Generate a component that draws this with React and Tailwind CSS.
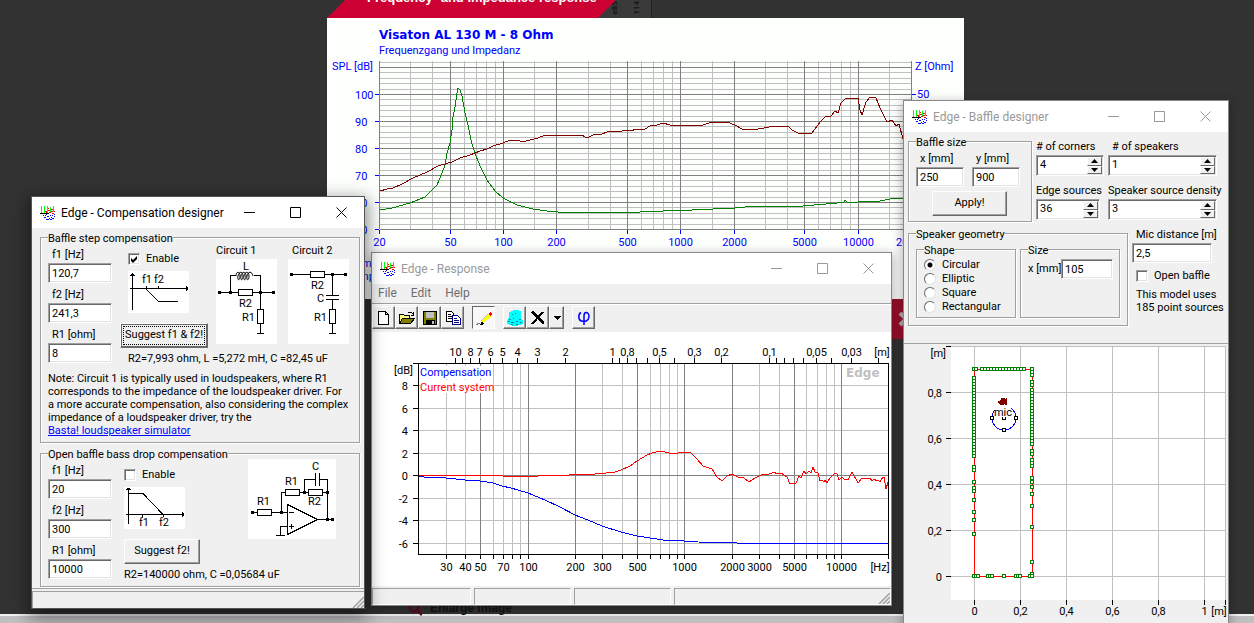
import { useId, useState } from "react";
import { clsx } from "clsx";

const SUNKEN =
  "border border-t-[#a0a0a0] border-l-[#a0a0a0] border-r-white border-b-white bg-white shadow-[inset_1px_1px_0_#696969,inset_-1px_-1px_0_#e3e3e3]";
const RAISED =
  "border border-t-white border-l-white border-r-[#696969] border-b-[#696969] bg-[#f0f0f0] shadow-[inset_-1px_-1px_0_#a0a0a0]";

const SPL_CURVE =
  "380,191 387,189 393,188 402,184 413,178 427,172 438,166 448,163 452,162 460,158 470,155 480,151 487,149 493,146 503,143 510,140 518,140 522,142 538,138 545,135 572,135 575,136 582,135 585,137 589,137 593,135 602,134 607,132 622,131 627,130 630,131 637,129 645,129 650,126 657,125 663,123 670,125 700,126 712,122 727,122 735,125 742,129 758,129 775,126 789,127 792,130 798,133 812,133 815,129 820,122 826,116 831,116 835,111 838,113 841,103 846,98 858,98 860,110 862,115 866,102 870,97 876,98 880,108 887,122 892,120 896,126 899,124 903,139 908,132";
const IMPEDANCE_CURVE =
  "380,210 392,208 410,203 425,197 437,185 439,180 442,173 445,165 447,153 450,143 452,130 453,117 455,107 457,93 458,88 460,90 462,96 465,113 468,125 470,135 472,144 476,156 481,168 487,180 495,191 503,198 517,205 533,209 547,211 558,212 640,212 663,211 692,210 735,208 755,206 767,207 787,206 803,206 837,203 844,202 845,200 847,202 858,202 880,201 890,199 910,198";
const SYSTEM_CURVE =
  "419,475 502,475 503,476 538,476 539,475 569,475 570,474 595,474 597,473 606,473 615,472 621,470 630,466 637,461 647,455 652,453 660,451 674,454 682,452 690,452 697,459 703,466 712,469 717,477 722,481 727,476 732,474 738,477 744,478 749,482 755,478 763,474 767,475 774,472 777,474 781,473 787,477 790,484 796,483 799,476 801,478 804,471 806,474 809,471 811,473 813,467 815,472 818,473 820,481 822,480 824,482 825,480 827,483 830,478 835,473 837,474 839,480 842,477 844,479 848,480 852,472 858,483 862,478 870,478 872,481 874,479 877,481 878,480 880,482 883,477 884,477 886,489 888,482";
const COMPENSATION_CURVE =
  "419,476 424,477 446,478 465,480 480,481 493,483 502,486 511,488 528,493 545,500 560,507 575,515 588,520 602,526 621,532 637,536 650,538 663,540 684,541 698,542 737,543 888,543";

function range(from, to, step) {
  const values = [];
  for (let v = from; v <= to; v += step) values.push(v);
  return values;
}

function logScale(start, decade) {
  return (hz) => Math.round(start + decade * Math.log10(hz / 20)) + 0.5;
}

function AppIcon() {
  return (
    <svg
      width="16"
      height="14"
      viewBox="0 0 16 14"
      shapeRendering="crispEdges"
      fill="none"
      className="shrink-0"
    >
      <path d="M1.5 0v7M4.5 0v7M7.5 0v7M10.5 1v6M13.5 0v6" stroke="#00ff00" />
      <path
        d="M5 5.5h2M8 4.5h2M11 5.5h2M6 6.5h1M9 6.5h2M12 7.5h2M8 2.5h1M11 3.5h2M14 5.5h1"
        stroke="#ff0000"
      />
      <path d="M0 7.5h9" stroke="#000" />
      <path
        d="M3 9.5h1M4 11.5h2M6 13.5h3M10 13.5h2M12 12.5h2M14 10.5h1M14 8.5h1M6 8.5h1M7 10.5h2M10 9.5h1M11 11.5h1M12 9.5h1M5 9.5h1M9 12.5h1"
        stroke="#0000ff"
      />
    </svg>
  );
}

function AppWindow({ title, active, className, children }) {
  return (
    <section
      aria-label={title}
      className={clsx(
        "absolute flex flex-col bg-[#f0f0f0]",
        active
          ? "shadow-[0_0_0_1px_#555,0_6px_16px_4px_rgba(0,0,0,0.45)]"
          : "shadow-[0_0_0_1px_#888,0_3px_10px_2px_rgba(0,0,0,0.3)]",
        className,
      )}
    >
      <header className="flex h-[31px] shrink-0 items-center bg-white pl-2">
        <AppIcon />
        <h2
          className={clsx(
            "ml-[5px] w-0 flex-1 font-[Roboto,sans-serif] text-[12px] leading-4 whitespace-nowrap",
            active ? "text-black" : "text-[#999]",
          )}
        >
          {title}
        </h2>
        <div className={clsx("flex h-full", active ? "text-black" : "text-[#999]")}>
          {[
            ["Minimize", "M0 5.5h11"],
            ["Maximize", "M0.5 0.5h10v10h-10z"],
            ["Close", "M0.5 0.5l10 10M10.5 0.5l-10 10"],
          ].map(([name, d]) => (
            <button key={name} type="button" aria-label={name} className="flex w-[46px] items-center justify-center">
              <svg width="11" height="11" viewBox="0 0 11 11" fill="none" stroke="currentColor">
                <path d={d} />
              </svg>
            </button>
          ))}
        </div>
      </header>
      {children}
    </section>
  );
}

function GroupBox({ title, className, children }) {
  return (
    <fieldset
      className={clsx(
        "min-w-0 border border-[#a0a0a0] pl-[7px] shadow-[1px_1px_0_#fff,inset_1px_1px_0_#fff]",
        className,
      )}
    >
      <legend className="h-3 bg-[#f0f0f0] leading-[15px] whitespace-nowrap">{title}</legend>
      {children}
    </fieldset>
  );
}

function Field({ label, value, className }) {
  const id = useId();
  return (
    <div className={clsx("flex flex-col", className)}>
      <label htmlFor={id} className="h-5 pl-1 leading-[23px] whitespace-nowrap">
        {label}
      </label>
      <input id={id} defaultValue={value} className={clsx("h-5 w-full px-[3px] outline-none", SUNKEN)} />
    </div>
  );
}

function SpinField({ label, value, labelClass, className }) {
  const id = useId();
  const [current, setCurrent] = useState(value);
  return (
    <div>
      <label htmlFor={id} className={clsx("block h-4 leading-4 whitespace-nowrap", labelClass)}>
        {label}
      </label>
      <div className={clsx("flex h-[21px] p-px", SUNKEN, className)}>
        <input
          id={id}
          value={current}
          onChange={(event) => setCurrent(event.target.value)}
          className="w-0 flex-1 bg-transparent pl-0.5 outline-none"
        />
        <div className="flex w-[15px] flex-col">
          {[
            ["Increase", 1, "M3.5 0L7 4H0z"],
            ["Decrease", -1, "M0 0h7L3.5 4z"],
          ].map(([name, delta, d]) => (
            <button
              key={name}
              type="button"
              aria-label={`${name} ${label}`}
              onClick={() => setCurrent(Number(current) + delta)}
              className="flex flex-1 items-center justify-center border border-t-white border-l-white border-r-[#696969] border-b-[#696969] bg-[#f0f0f0]"
            >
              <svg width="7" height="4" viewBox="0 0 7 4">
                <path d={d} />
              </svg>
            </button>
          ))}
        </div>
      </div>
    </div>
  );
}

function CheckBox({ label, checked, className }) {
  return (
    <label className={clsx("flex h-4 items-center gap-1.5", className)}>
      <span className="relative flex">
        <input type="checkbox" defaultChecked={checked} className={clsx("peer size-3 appearance-none", SUNKEN)} />
        <svg
          width="12"
          height="12"
          viewBox="0 0 12 12"
          className="pointer-events-none absolute inset-0 hidden peer-checked:block"
        >
          <path d="M3 5l2 2 4-4v3L5 10 3 8z" />
        </svg>
      </span>
      {label}
    </label>
  );
}

function PushButton({ children, isDefault, className }) {
  return (
    <button
      type="button"
      className={clsx(
        "h-[25px] whitespace-nowrap",
        RAISED,
        isDefault && "p-0.5 ring-1 ring-[#696969] ring-inset",
        className,
      )}
    >
      {isDefault ? (
        <span className="flex h-full items-center justify-center border border-dotted border-black">{children}</span>
      ) : (
        children
      )}
    </button>
  );
}

function ResizeGrip() {
  return (
    <svg width="12" height="12" viewBox="0 0 12 12" className="self-end" fill="none">
      <path d="M12 1L1 12M12 5L5 12M12 9L9 12" stroke="#a0a0a0" strokeWidth="1.5" />
    </svg>
  );
}

function StepSketch() {
  return (
    <svg
      width="61"
      height="42"
      viewBox="0 0 61 42"
      className="ml-2 self-start bg-white"
      fill="none"
      stroke="#000"
      shapeRendering="crispEdges"
    >
      <path d="M4.5 39V2M2 4.5h5M3 3.5h3M2 17.5h57M58.5 15v5M59.5 16v3M18.5 15v3M30.5 15v3M18 18l12 12h20" />
      <g fill="#000" stroke="none">
        <text x="14" y="12">f1</text>
        <text x="26" y="12">f2</text>
      </g>
    </svg>
  );
}

function DropSketch() {
  return (
    <svg width="61" height="42" viewBox="0 0 61 42" className="bg-white" fill="none" stroke="#000" shapeRendering="crispEdges">
      <path d="M4.5 37V1M2 2.5h5M3 1.5h3M4 6.5h15l20 21M2 27.5h57M58.5 25v5M59.5 26v3M18.5 28v2M39.5 28v2" />
      <g fill="#000" stroke="none">
        <text x="15" y="39">f1</text>
        <text x="35" y="39">f2</text>
      </g>
    </svg>
  );
}

function CircuitOne() {
  return (
    <svg width="61" height="85" viewBox="0 0 61 85" className="bg-white" fill="none" stroke="#000" shapeRendering="crispEdges">
      <path d="M3 33.5h19M37 33.5h22M14.5 33V16.5H20M38 16.5h6.5V50M22.5 30.5h14v6h-14zM41.5 50.5h6v14h-6zM44.5 65v9M41 74.5h7" />
      <path
        d="M20 17c0-5 4-5 4 0s-3 5-2 0 5-5 5 0-3 5-2 0 5-5 5 0-3 5-2 0 5-5 5 0-3 5-2 0 5-5 6 0"
        shapeRendering="auto"
      />
      <g fill="#000" stroke="none">
        <path d="M2 32h3v3H2zM13 32h3v3h-3zM43 32h3v3h-3zM56 32h3v3h-3z" />
        <text x="27" y="11">L</text>
        <text x="23" y="48">R2</text>
        <text x="26" y="62">R1</text>
      </g>
    </svg>
  );
}

function CircuitTwo() {
  return (
    <svg width="61" height="85" viewBox="0 0 61 85" className="bg-white" fill="none" stroke="#000" shapeRendering="crispEdges">
      <path d="M3 15.5h19M37 15.5h21M22.5 12.5h14v6h-14zM44.5 15v21M38 36.5h13M38 40.5h13M44.5 41v9M41.5 50.5h6v14h-6zM44.5 65v9M41 74.5h7" />
      <g fill="#000" stroke="none">
        <path d="M2 14h3v3H2zM43 14h3v3h-3zM56 14h3v3h-3z" />
        <text x="23" y="30">R2</text>
        <text x="29" y="43">C</text>
        <text x="26" y="62">R1</text>
      </g>
    </svg>
  );
}

function OpAmpCircuit() {
  return (
    <svg width="88" height="80" viewBox="0 0 88 80" className="bg-white" fill="none" stroke="#000" shapeRendering="crispEdges">
      <path d="M4 53.5h5M24 53.5h15M9.5 50.5h14v6h-14zM33.5 53V33.5H37M37.5 30.5h14v6h-14zM52 33.5h8M60.5 30.5h14v6h-14zM75 33.5h4.5V60M56.5 33V20.5h11M72 20.5h7.5V34M67.5 14v13M71.5 14v13M69 60.5h16" />
      <path d="M39.5 45.5v30l30-15zM39 67.5h-6.5V76M28 76.5h9M41 53.5h5M41 67.5h5M43.5 65v5" />
      <g fill="#000" stroke="none">
        <path d="M3 52h3v3H3zM32 52h3v3h-3zM55 32h3v3h-3zM78 32h3v3h-3zM78 59h3v3h-3zM83 59h3v3h-3z" />
        <text x="9" y="46">R1</text>
        <text x="37" y="26">R1</text>
        <text x="60" y="46">R2</text>
        <text x="64" y="11">C</text>
      </g>
    </svg>
  );
}

function CompensationWindow() {
  return (
    <AppWindow title="Edge - Compensation designer" active className="top-[197px] left-8 w-[332px]">
      <div className="flex flex-col gap-1 pt-[3px] pr-1 pl-2">
        <GroupBox title="Baffle step compensation" className="pb-[5px]">
          <div className="flex gap-2">
            <div className="w-16 shrink-0">
              <Field label="f1 [Hz]" value="120,7" />
              <Field label="f2 [Hz]" value="241,3" />
              <Field label="R1 [ohm]" value="8" />
            </div>
            <div className="flex flex-col">
              <div className="flex gap-2">
                <div className="flex w-[88px] flex-col pt-2">
                  <CheckBox label="Enable" checked className="mb-1 self-start pl-2" />
                  <StepSketch />
                  <PushButton isDefault className="mt-2.5 w-full">
                    Suggest f1 &amp; f2!
                  </PushButton>
                </div>
                <div className="w-16">
                  <p className="h-4 leading-4">Circuit 1</p>
                  <CircuitOne />
                </div>
                <div className="w-16">
                  <p className="h-4 pl-1 leading-4">Circuit 2</p>
                  <CircuitTwo />
                </div>
              </div>
              <p className="mt-1 pl-2 leading-[13px] whitespace-nowrap">R2=7,993 ohm, L =5,272 mH, C =82,45 uF</p>
            </div>
          </div>
          <p className="mt-[7px] leading-[13px] whitespace-nowrap">
            Note: Circuit 1 is typically used in loudspeakers, where R1
            <br />
            corresponds to the impedance of the loudspeaker driver. For
            <br />
            a more accurate compensation, also considering the complex
            <br />
            impedance of a loudspeaker driver, try the
            <br />
            <a href="#basta" className="text-[#0000ff] underline">
              Basta! loudspeaker simulator
            </a>
          </p>
        </GroupBox>
        <GroupBox title="Open baffle bass drop compensation" className="pb-[5px]">
          <div className="flex gap-3">
            <div className="w-16 shrink-0">
              <Field label="f1 [Hz]" value="20" />
              <Field label="f2 [Hz]" value="300" />
              <Field label="R1 [ohm]" value="10000" />
            </div>
            <div className="flex flex-col">
              <div className="flex gap-12">
                <div className="flex w-[76px] flex-col items-start pt-2">
                  <CheckBox label="Enable" className="mb-1" />
                  <DropSketch />
                  <PushButton className="mt-2.5 w-full">Suggest f2!</PushButton>
                </div>
                <OpAmpCircuit />
              </div>
              <p className="mt-1 leading-[13px] whitespace-nowrap">R2=140000 ohm, C =0,05684 uF</p>
            </div>
          </div>
        </GroupBox>
      </div>
      <footer className="mt-px flex h-5 justify-end border-t border-[#a0a0a0] pt-0.5">
        <div className="flex flex-1 justify-end border-t border-l border-[#a0a0a0]">
          <ResizeGrip />
        </div>
      </footer>
    </AppWindow>
  );
}

const TOOL_GROUPS = [
  [
    [
      "New",
      <path key="n" d="M2.5 1.5h7l3 3v10h-10zM9.5 1.5v3h3" fill="#fff" stroke="#000" />,
    ],
    [
      "Open",
      <g key="o">
        <path d="M0.5 13.5v-9h4l1 1h5v3" fill="#ffff80" stroke="#000" />
        <path d="M0.5 13.5l3-5h12l-4 5z" fill="#808000" stroke="#000" />
        <path d="M8.5 2.5h4l2 2M14.5 2v3H12" fill="none" stroke="#000" />
      </g>,
    ],
    [
      "Save",
      <g key="s">
        <path d="M1.5 1.5h13v13h-13z" fill="#808000" stroke="#000" />
        <path d="M4 2h8v6H4z" fill="#c0c0c0" />
        <path d="M4 10h9v4H4z" fill="#000" />
        <path d="M10 11h2v3h-2z" fill="#c0c0c0" />
      </g>,
    ],
    [
      "Copy",
      <g key="c" fill="#fff">
        <path d="M1.5 1.5h5l2 2v8h-7z" stroke="#000" />
        <path d="M3 4.5h3M3 6.5h4M3 8.5h4" stroke="#000" />
        <path d="M7.5 5.5h5l3 3v6h-8z" stroke="#000080" />
        <path d="M9 8.5h3M9 10.5h5M9 12.5h5" stroke="#000080" />
      </g>,
    ],
  ],
  [
    [
      "Draw",
      <g key="d">
        <path d="M5 11l7-7 3 3-7 5H5z" fill="#ffff00" />
        <path d="M5 11l7-7" stroke="#c0c0c0" />
        <path d="M13 3h3v2h-3zM14 2h1v4h-1z" fill="#ff0000" />
        <path d="M0 14.5h2M1 13.5h3" stroke="#808080" />
        <path d="M4 14.5h3M5 13.5h3M5 12.5h2" stroke="#000" />
      </g>,
      "pressed",
    ],
  ],
  [
    [
      "Calculate",
      <g key="k">
        <path d="M2 2h2V1h2V0h6v1h2v8h1v1h1v4h-2v1h-3v1H5v-1H2v-1H0v-4h1V8h1z" fill="#00ffff" />
        <path
          d="M1 11.5h2M4 12.5h3M9 11.5h2M13 12.5h2M5 4.5h1M8 3.5h1M6 8.5h1M4 14.5h2M9 14.5h2M2 9.5h2M12 9.5h2"
          stroke="#009090"
        />
      </g>,
    ],
    [
      "Delete",
      <path
        key="x"
        d="M2 2l12 12M3 2l11 11M13 2L2 14"
        fill="none"
        stroke="#000"
        strokeWidth="2"
      />,
    ],
    ["Delete options", <path key="v" d="M5 6h7L8.5 10z" />, "narrow"],
  ],
];

function Toolbar() {
  return (
    <div className="flex h-[29px] items-start gap-2 border-t border-[#a0a0a0] pt-0.5 shadow-[inset_0_1px_0_#fff]">
      {TOOL_GROUPS.map((group) => (
        <div key={group[0][0]} className="flex">
          {group.map(([name, icon, kind]) => (
            <button
              key={name}
              type="button"
              aria-label={name}
              className={clsx(
                "flex h-[23px] items-center justify-center overflow-hidden",
                kind === "narrow" ? "w-[15px]" : "w-[23px]",
                kind === "pressed"
                  ? "border border-t-[#696969] border-l-[#696969] border-r-white border-b-white bg-[#f8f8f8]"
                  : RAISED,
              )}
            >
              <svg width="16" height="16" viewBox="0 0 16 16" shapeRendering="crispEdges" className="shrink-0">
                {icon}
              </svg>
            </button>
          ))}
        </div>
      ))}
      <button type="button" aria-label="Phase" className={clsx("flex h-[23px] w-[23px] items-center justify-center", RAISED)}>
        <svg width="14" height="16" viewBox="0 0 14 16" fill="none" stroke="#0000ff" strokeWidth="1.5">
          <path d="M4 2.5C1 4 1 10 4.5 11c3 .8 7 .5 7.5-4 .3-3-1.5-4.5-3-4.500S7 4 7 6v9" />
        </svg>
      </button>
    </div>
  );
}

function ResponseChart() {
  const x = logScale(418, 156.8);
  const y = (db) => Math.round(475 - db * 11.25) + 0.5;
  const minor = [30, 40, 60, 70, 80, 90, 300, 400, 600, 700, 800, 900, 3000, 4000, 6000, 7000, 8000, 9000];
  const major = [50, 100, 200, 500, 1000, 2000, 5000, 10000];
  const metres = [
    ...range(2, 10, 1),
    ...range(1, 10, 1).map((n) => n / 10),
    ...range(2, 9, 1).map((n) => n / 100),
  ];
  const metreLabels = ["10", "8", "7", "6", "5", "4", "3", "2", "1", "0,8", "0,5", "0,3", "0,2", "0,1", "0,05", "0,03"];
  const hzLabels = [30, 40, 50, 70, 100, 200, 300, 500, 1000, 2000, 3000, 5000, 10000];

  return (
    <svg viewBox="372 332 519 254" className="block w-full bg-white" shapeRendering="crispEdges" fill="none">
      <g stroke="#c0c0c0">
        {minor.map((hz) => (
          <path key={hz} d={`M${x(hz)} 364V554`} />
        ))}
        {[8, 6, 4, 2, -2, -4, -6].map((db) => (
          <path key={db} d={`M419 ${y(db)}H888`} />
        ))}
      </g>
      <g stroke="#808080">
        {major.map((hz) => (
          <path key={hz} d={`M${x(hz)} 364V554`} />
        ))}
        <path d="M419 475.5H888" />
      </g>
      <g stroke="#000">
        <path d="M413 363.5H888.5V559M418.5 363V554.5H888" />
        {[8, 6, 4, 2, 0, -2, -4, -6].map((db) => (
          <path key={db} d={`M413 ${y(db)}h5`} />
        ))}
        {[...minor, ...major].map((hz) => (
          <path key={hz} d={`M${x(hz)} 555v4`} />
        ))}
        {metres.map((m) => (
          <path key={m} d={`M${x(344 / m)} 358v5`} />
        ))}
      </g>
      <polyline points={COMPENSATION_CURVE} stroke="#0000ff" />
      <polyline points={SYSTEM_CURVE} stroke="#ff0000" />
      <path d="M420 366h68v13h-68zM420 380h70v13h-70zM845 365h38v17h-38z" fill="#fff" />
      <g fill="#000" textAnchor="middle">
        {metreLabels.map((label) => (
          <text key={label} x={x(344 / Number(label.replace(",", ".")))} y="356">
            {label}
          </text>
        ))}
        <text x="882" y="356">[m]</text>
        {hzLabels.map((hz) => (
          <text key={hz} x={x(hz)} y="571">
            {hz}
          </text>
        ))}
        <text x="880" y="571">[Hz]</text>
      </g>
      <g fill="#000" textAnchor="end">
        <text x="413" y="374">[dB]</text>
        {[8, 6, 4, 2, 0, -2, -4, -6].map((db) => (
          <text key={db} x="408" y={y(db) + 4}>
            {db}
          </text>
        ))}
      </g>
      <text x="420" y="376" fill="#0000ff">Compensation</text>
      <text x="420" y="391" fill="#ff0000">Current system</text>
      <text x="846" y="377" fill="#c0c0c0" className="font-['DejaVu_Sans',sans-serif] text-[12px] font-bold">
        Edge
      </text>
    </svg>
  );
}

function ResponseWindow() {
  return (
    <AppWindow title="Edge - Response" className="top-[253px] left-[372px] w-[519px]">
      <nav className="flex h-[19px] items-center gap-3.5 pb-0.5 pl-1.5 font-[Roboto,sans-serif] text-[12px] text-[#6d6d6d]">
        {["File", "Edit", "Help"].map((item) => (
          <button key={item} type="button">
            {item}
          </button>
        ))}
      </nav>
      <Toolbar />
      <ResponseChart />
      <footer className="flex h-[19px] gap-[3px] pt-0.5">
        {["w-[99px]", "w-[97px]", "w-[97px]"].map((width, index) => (
          <div
            key={index}
            className={clsx("border border-t-[#a0a0a0] border-l-[#a0a0a0] border-r-white border-b-white", width)}
          />
        ))}
        <div className="flex flex-1 justify-end border border-t-[#a0a0a0] border-l-[#a0a0a0] border-r-white border-b-white">
          <ResizeGrip />
        </div>
      </footer>
    </AppWindow>
  );
}

const EDGE_SOURCES = [
  ...[369, ...range(378, 457, 3), 467, 470, 482, 488, 491, 500, 512, 520, 534, 576].map((y) => [974, y]),
  ...[369, 372, 375, 382, 385, ...range(390, 446, 3), 451, 454, 460, 463, 466, 478, 482, 487, 494, 506, 527, 562, 574].map(
    (y) => [1032, y],
  ),
  ...[976, ...range(982, 1026, 3)].map((x) => [x, 369]),
  ...[976, 978, 988, 990, 992, 1004, 1016, 1018, 1020, 1030, 1032].map((x) => [x, 576]),
];

function BafflePlot() {
  const ticks = [0, 0.2, 0.4, 0.6, 0.8, 1];
  const x = (m) => Math.round(974 + m * 230) + 0.5;
  const y = (m) => Math.round(576 - m * 230) + 0.5;
  const format = (m) => String(m).replace(".", ",");

  return (
    <svg viewBox="904 345 324 285" className="block w-full" shapeRendering="crispEdges" fill="none">
      <path d="M951 346h275v254H951z" fill="#fff" />
      <g stroke="#c0c0c0">
        {ticks.map((m) => (
          <path key={m} d={`M${x(m)} 346V600M951 ${y(m)}H1225`} />
        ))}
        <path d="M1225.5 346V600" />
      </g>
      <g stroke="#000">
        {ticks.map((m) => (
          <path key={m} d={`M${x(m)} 600v5M946 ${y(m)}h5`} />
        ))}
        <path d="M1225.5 600v5" />
      </g>
      <path d="M974.5 369.5h58v207h-58z" stroke="#ff0000" />
      <g fill="#fff" stroke="#008000">
        {EDGE_SOURCES.map(([cx, cy]) => (
          <rect key={`${cx}-${cy}`} x={cx - 1.5} y={cy - 1.5} width="3" height="3" />
        ))}
      </g>
      <circle cx="1004" cy="418" r="12" stroke="#0000ff" />
      <path d="M995 406h16v11h-16z" fill="#fff" />
      <g fill="#fff" stroke="#000">
        <path d="M990.5 416.5h3v3h-3zM1014.5 416.5h3v3h-3zM1002.5 428.5h3v3h-3z" />
        <path d="M1002.5 417v2.5h3V417" />
      </g>
      <path d="M998 401h2v-1h1v-2h4v1h1v-1h1v7h-2v-1h-1v1h-4v-1h-1v-1h-1z" fill="#800000" />
      <g fill="#000" textAnchor="end">
        <text x="946" y="357">[m]</text>
        {ticks.slice(0, 5).map((m) => (
          <text key={m} x="942" y={y(m) + 4}>
            {format(m)}
          </text>
        ))}
      </g>
      <g fill="#000" textAnchor="middle">
        <text x="1003" y="416">mic</text>
        {ticks.map((m) => (
          <text key={m} x={x(m)} y="615">
            {format(m)}
          </text>
        ))}
        <text x="1219" y="615">[m]</text>
      </g>
    </svg>
  );
}

function BaffleWindow() {
  return (
    <AppWindow title="Edge - Baffle designer" className="top-[101px] left-[904px] w-[324px]">
      <div className="flex flex-col gap-[5px] px-1 pt-[3px] pb-[17px]">
        <div className="flex gap-1">
          <GroupBox title="Baffle size" className="w-[124px] pb-[5px]">
            <div className="flex gap-2">
              <Field label="x [mm]" value="250" className="w-12" />
              <Field label="y [mm]" value="900" className="w-12" />
            </div>
            <PushButton className="mt-1 ml-4 w-[75px]">Apply!</PushButton>
          </GroupBox>
          <div className="grid grid-cols-[68px_109px] content-start gap-x-1 gap-y-[7px] pt-1">
            <SpinField label="# of corners" value="4" />
            <SpinField label="# of speakers" value="1" labelClass="pl-1" />
            <SpinField label="Edge sources" value="36" className="w-16" />
            <SpinField label="Speaker source density" value="3" />
          </div>
        </div>
        <div className="flex gap-1">
          <GroupBox title="Speaker geometry" className="w-[220px] pt-1 pr-[7px] pb-[7px]">
            <div className="grid grid-cols-2 gap-1">
              <GroupBox title="Shape" className="pt-[3px] pb-[3px]">
                {["Circular", "Elliptic", "Square", "Rectangular"].map((shape) => (
                  <label key={shape} className="flex h-3.5 items-center gap-1.5">
                    <input
                      type="radio"
                      name="shape"
                      defaultChecked={shape === "Circular"}
                      className="size-3 appearance-none rounded-full border border-t-[#696969] border-l-[#696969] border-r-[#e3e3e3] border-b-[#e3e3e3] bg-white checked:bg-[radial-gradient(circle,#000_2px,#fff_3px)]"
                    />
                    {shape}
                  </label>
                ))}
              </GroupBox>
              <GroupBox title="Size">
                <label className="mt-1 flex items-center gap-px whitespace-nowrap">
                  <span className="w-8">x [mm]</span>
                  <input defaultValue="105" className={clsx("h-5 w-[52px] px-[3px] outline-none", SUNKEN)} />
                </label>
              </GroupBox>
            </div>
          </GroupBox>
          <div className="flex-1">
            <Field label="Mic distance [m]" value="2,5" className="-mt-1 w-20" />
            <CheckBox label="Open baffle" className="mt-[5px] pl-1" />
            <p className="mt-1 pl-1 leading-[13px] whitespace-nowrap">
              This model uses
              <br />
              185 point sources
            </p>
          </div>
        </div>
      </div>
      <div className="border-t border-[#a0a0a0] pt-px">
        <BafflePlot />
      </div>
    </AppWindow>
  );
}

function FrequencyPanel() {
  const x = logScale(379, 177.4);
  const y = (db) => Math.round(94 - (db - 100) * 2.7) + 0.5;
  const minor = [
    30, 40, 60, 70, 80, 90, 150, 300, 400, 600, 700, 800, 900, 1500, 3000, 4000, 6000, 7000, 8000, 9000, 15000,
  ];
  const major = [20, 50, 100, 200, 500, 1000, 2000, 5000, 10000, 20000];

  return (
    <svg
      viewBox="327 18 637 281"
      className="absolute top-[18px] left-[327px] w-[637px] bg-[#fdfffd]"
      shapeRendering="crispEdges"
      fill="none"
    >
      <g stroke="#c0c0c0">
        {minor.map((hz) => (
          <path key={hz} d={`M${x(hz)} 61V229`} />
        ))}
        {range(52, 112, 2).map((db) => (
          <path key={db} d={`M380 ${y(db)}H911`} />
        ))}
      </g>
      <g stroke="#808080">
        {major.map((hz) => (
          <path key={hz} d={`M${x(hz)} 61V229`} />
        ))}
        {range(50, 110, 10).map((db) => (
          <path key={db} d={`M380 ${y(db)}H911`} />
        ))}
      </g>
      <g stroke="#0000ff">
        {major.map((hz) => (
          <path key={hz} d={`M${x(hz)} 230v4`} />
        ))}
        {range(50, 100, 10).map((db) => (
          <path key={db} d={`M375 ${y(db)}h4`} />
        ))}
        <path d="M912 94.5h4" />
      </g>
      <polyline points={IMPEDANCE_CURVE} stroke="#008000" />
      <polyline points={SPL_CURVE} stroke="#800000" />
      <g fill="#0000ff">
        <text x="379" y="39" className="font-['DejaVu_Sans',sans-serif] text-[12px] font-bold">
          Visaton AL 130 M - 8 Ohm
        </text>
        <text x="379" y="54">Frequenzgang und Impedanz</text>
        <text x="332" y="70">SPL [dB]</text>
        <text x="915" y="70">Z [Ohm]</text>
        <text x="917" y="98">50</text>
        {range(50, 100, 10).map((db) => (
          <text key={db} x="355" y={y(db) + 4}>
            {db}
          </text>
        ))}
        <g textAnchor="middle">
          {major.map((hz) => (
            <text key={hz} x={x(hz)} y="246">
              {hz}
            </text>
          ))}
        </g>
        <text x="362" y="267">m</text>
        <text x="359" y="280">mp</text>
      </g>
    </svg>
  );
}

export default function App() {
  return (
    <div className="relative flex h-screen w-full flex-col justify-end overflow-hidden bg-[#323232] font-[Roboto,'Liberation_Sans',sans-serif] text-[11px] text-black">
      <div className="absolute top-0 left-[598px] flex h-[18px] w-[54px] items-start justify-end gap-2.5 border-r border-[#222] bg-[#3a3a3a] pt-px pr-2 text-[8px] leading-3 font-bold text-[#161616]">
        <span className="rotate-180 [writing-mode:vertical-rl]">e85</span>
        <span className="rotate-180 [writing-mode:vertical-rl]">114</span>
      </div>
      <h1 className="absolute top-0 left-[327px] h-[18px] w-[289px] overflow-hidden bg-[#cc0033] font-['Liberation_Sans',sans-serif] font-bold text-white [clip-path:polygon(18px_0,100%_0,271px_100%,0_100%)]">
        <span className="-mt-2.5 block pl-10 text-[13px] leading-4 whitespace-nowrap">
          Frequency- and impedance response
        </span>
      </h1>
      <FrequencyPanel />
      <button
        type="button"
        aria-label="Close image"
        className="absolute top-[299px] left-[876px] flex h-10 w-10 items-center justify-end bg-[#9b0f2c] pr-0.5"
      >
        <svg width="16" height="16" viewBox="0 0 16 16" stroke="#b8b0b0" strokeWidth="4">
          <path d="M2 2l12 12M14 2L2 14" />
        </svg>
      </button>
      <a
        href="#enlarge"
        className="absolute top-[600px] left-[408px] flex items-center gap-2 font-['Liberation_Sans',sans-serif] text-[12px] leading-4 font-bold text-[#141414]"
      >
        <svg width="14" height="15" viewBox="0 0 14 15" fill="none" stroke="#5c0a1c" strokeWidth="2.5">
          <circle cx="6" cy="6" r="4.5" />
          <path d="M9 9l5 5" />
        </svg>
        Enlarge image
      </a>
      <div className="h-[9px] border-t-2 border-[#f0f0f0] bg-[#c0c0c0]" />
      <ResponseWindow />
      <BaffleWindow />
      <CompensationWindow />
    </div>
  );
}
